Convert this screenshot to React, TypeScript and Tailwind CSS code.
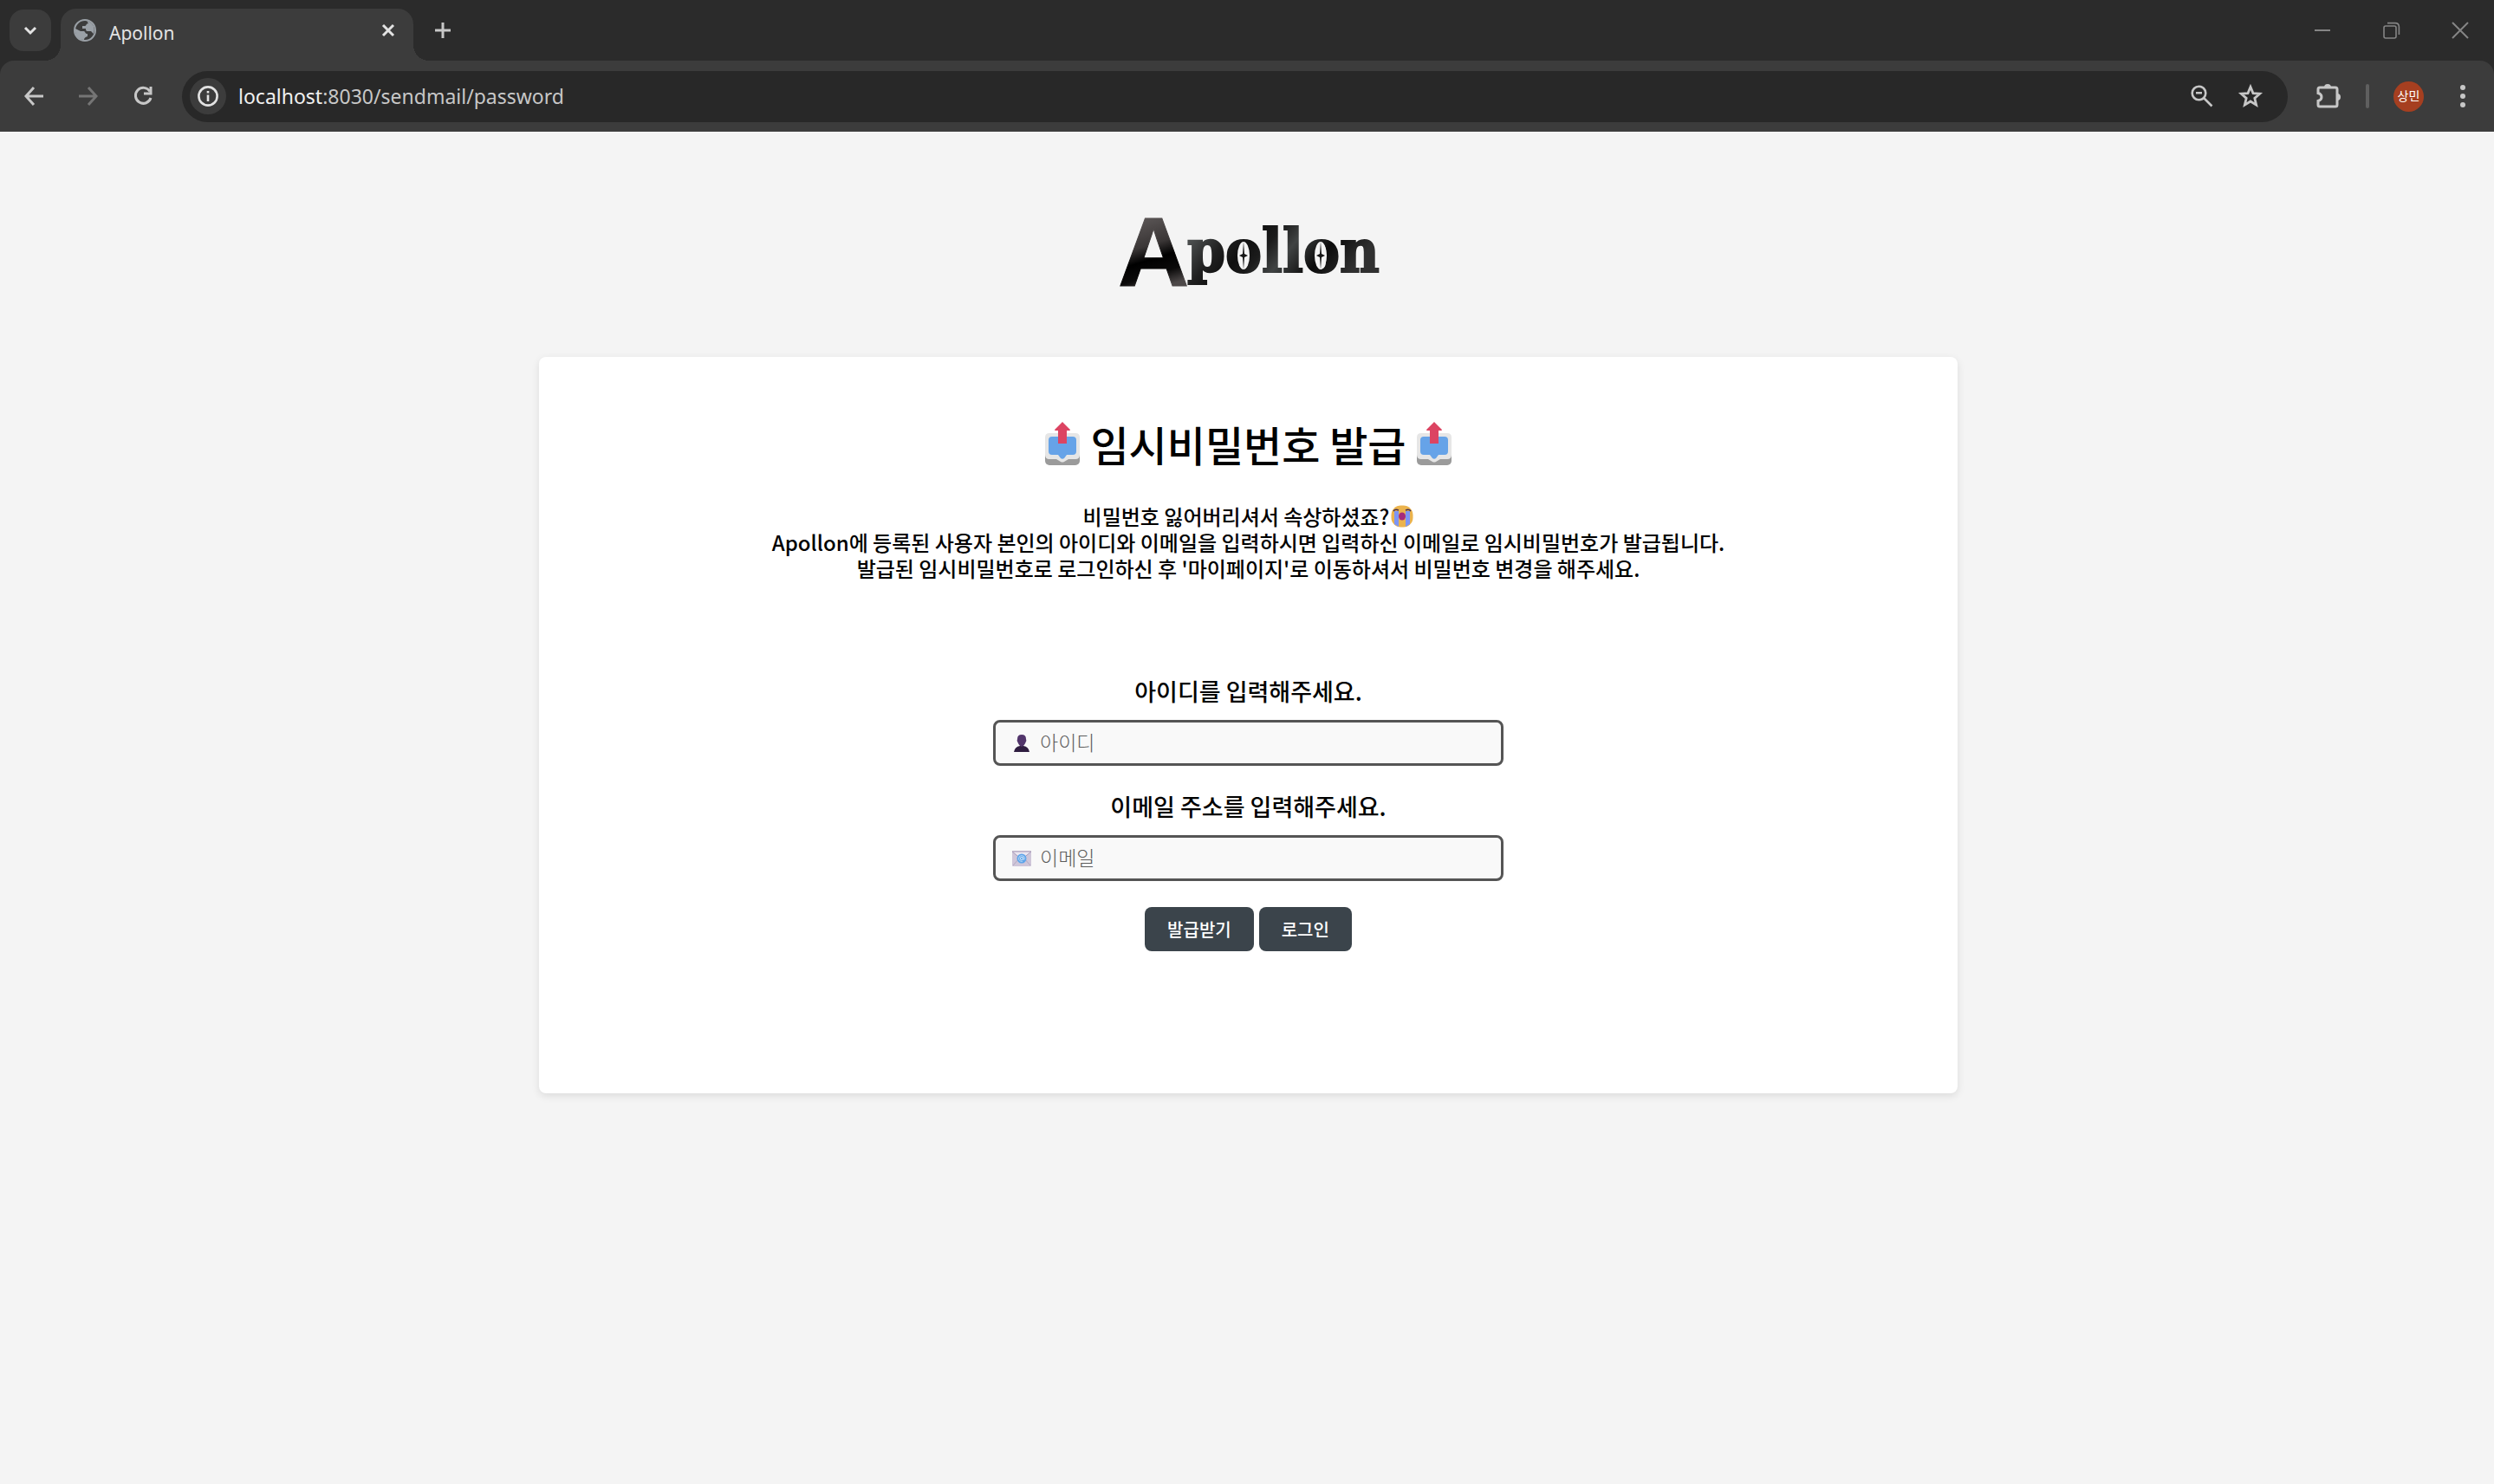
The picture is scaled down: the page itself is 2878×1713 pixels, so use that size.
import type { ReactNode } from "react";

const uiFont = `font-['Noto_Sans','Noto_Sans_CJK_KR',sans-serif]`;
const pageFont = `font-['Noto_Sans_CJK_KR',sans-serif]`;

interface IconProps {
  className?: string;
}

function GlobeIcon() {
  return (
    <svg width="26" height="26" viewBox="0 0 26 26" aria-hidden="true">
      <circle cx="13" cy="13" r="12" fill="#3c3c3c" stroke="#9aa0a6" strokeWidth="2" />
      <path
        d="M11 2 C15 1 20 3 23 8 C24 11 24 14 23 17 L20 14 H16 C14 14 14 12 14 11 H10 V8 H13 C15 8 14 5 17 5 L15 2 Z"
        fill="#9aa0a6"
      />
      <path d="M2 11 L8 14 H12 C14 15 13 17 16 17 V20 C13 21 12 22 12 24 C5 24 1 18 2 11 Z" fill="#9aa0a6" />
    </svg>
  );
}

function StrokeIcon({
  d,
  size,
  width = 2,
  className,
}: IconProps & { d: string; size: number; width?: number }) {
  return (
    <svg
      className={className}
      width={size}
      height={size}
      viewBox={`0 0 ${size} ${size}`}
      fill="none"
      stroke="currentColor"
      strokeWidth={width}
      aria-hidden="true"
    >
      <path d={d} />
    </svg>
  );
}

function ReloadIcon() {
  return (
    <svg width="24" height="24" viewBox="0 0 24 24" fill="none" stroke="#c7c7c7" strokeWidth="3" aria-hidden="true">
      <path d="M20 6.5 A9 9 0 1 0 21 14" />
      <path d="M21 1 V9 H13" />
    </svg>
  );
}

function InfoIcon() {
  return (
    <svg width="24" height="24" viewBox="0 0 24 24" fill="none" stroke="#e3e3e3" aria-hidden="true">
      <circle cx="12" cy="12" r="10.6" strokeWidth="2.6" />
      <path d="M12 10.5 V18 M12 6 V8.6" strokeWidth="2.6" />
    </svg>
  );
}

function ZoomOutIcon() {
  return (
    <svg width="26" height="26" viewBox="0 0 26 26" fill="none" stroke="#c7c7c7" strokeWidth="2.6" aria-hidden="true">
      <circle cx="9.5" cy="9.5" r="7.8" />
      <path d="M15 15 L24.5 24.5 M6 9.2 H13" />
    </svg>
  );
}

function StarIcon() {
  return (
    <svg width="30" height="30" viewBox="0 0 28 28" fill="none" stroke="#c7c7c7" strokeWidth="2.6" aria-hidden="true">
      <path d="M14 4 L16.8 10.8 L24 11.4 L18.5 16.2 L20.2 23.4 L14 19.6 L7.8 23.4 L9.5 16.2 L4 11.4 L11.2 10.8 Z" />
    </svg>
  );
}

function PuzzleIcon() {
  return (
    <svg width="30" height="30" viewBox="0 0 30 30" fill="none" aria-hidden="true">
      <path
        d="M5 5 H23 Q25 5 25 7 V25 Q25 27 23 27 H5 Q3 27 3 25 V20.5 Q7 19.5 7 16 Q7 12.5 3 11.5 V7 Q3 5 5 5 Z"
        stroke="#c7c7c7"
        strokeWidth="3"
      />
      <path d="M10 5 A4 4 0 0 1 18 5 Z M25 12 A4 4 0 0 1 25 20 Z" fill="#c7c7c7" />
    </svg>
  );
}

function RestoreIcon() {
  return (
    <svg width="20" height="20" viewBox="0 0 20 20" fill="none" stroke="#858585" strokeWidth="1.6" aria-hidden="true">
      <rect x="1" y="5" width="14" height="14" rx="2" />
      <path d="M5 1.6 H14 Q18.4 1.6 18.4 6 V15" />
    </svg>
  );
}

function OutboxIcon() {
  return (
    <svg width="40" height="50" viewBox="0 0 40 50" role="img" aria-label="보낼 편지함">
      <rect x="0" y="20" width="40" height="30" rx="5" fill="#9b9b9b" />
      <path
        d="M5 13 H35 Q40 13 40 18 V38 Q40 43 35 43 H27 L22 46 Q20 47 18 46 L13 43 H5 Q0 43 0 38 V18 Q0 13 5 13 Z"
        fill="#e6e6e6"
      />
      <path
        d="M8 17 H32 Q36 17 36 21 V34 Q36 38 32 38 H25 L22 42 Q20 43.5 18 42 L15 38 H8 Q4 38 4 34 V21 Q4 17 8 17 Z"
        fill="#66a3e8"
      />
      <path d="M20 0 L29 9 Q29 10 28 10 H25 V25 H15 V10 H12 Q11 10 11 9 Z" fill="#dc4462" />
    </svg>
  );
}

function CryingIcon() {
  return (
    <svg width="26" height="26" viewBox="0 0 26 26" role="img" aria-label="우는 얼굴">
      <rect x="0.5" y="0.5" width="25" height="25" rx="11" fill="#ebb34d" />
      <path d="M4 7 H9 V25 L4 22 Z M17 7 H22 V22 L17 25 Z" fill="#7c95f5" />
      <path d="M3 7 Q5 4 9 6 M17 6 Q21 4 23 7" stroke="#43304f" strokeWidth="1.5" fill="none" />
      <ellipse cx="13" cy="13" rx="4" ry="4.5" fill="#a52c7c" />
    </svg>
  );
}

function PersonIcon() {
  return (
    <svg className="shrink-0" width="22" height="20" viewBox="0 0 22 20" aria-hidden="true">
      <path d="M2 20 Q3 14 9 13 H13 Q19 14 20 20 Z" fill="#2f1d40" />
      <path d="M11 0 Q16 0 16 5 Q17 7 15.5 9 Q14 13 11 14 Q8 13 6.5 9 Q5 7 6 5 Q6 0 11 0 Z" fill="#52356b" />
    </svg>
  );
}

function MailIcon() {
  return (
    <svg className="shrink-0" width="22" height="18" viewBox="0 0 22 18" aria-hidden="true">
      <rect width="22" height="18" rx="1" fill="#cfc6d9" />
      <path d="M0 1 L11 10 L22 1 Z" fill="#ebe6f0" stroke="#a99db8" />
      <path d="M1 17 L8 9 M21 17 L14 9" stroke="#b3a8c1" />
      <circle cx="11" cy="9" r="5.5" fill="#5ea5ea" />
      <circle cx="11" cy="9" r="1.6" fill="none" stroke="#e4f0fb" strokeWidth="0.8" />
      <path d="M12.6 7.4 V10 Q14 11 14.4 9 Q14.4 5.6 11 5.6 Q7.6 5.6 7.6 9 Q7.6 12.4 12 12.4" fill="none" stroke="#cfe4f8" strokeWidth="0.8" />
    </svg>
  );
}

function Logo() {
  return (
    <svg width="312" height="150" viewBox="-6 -31 312 150" role="img" aria-label="Apollon">
      <defs>
        <linearGradient id="initial" x1="0.3" y1="0" x2="0.5" y2="1">
          <stop offset="0.2" stopColor="#5a5555" />
          <stop offset="0.45" stopColor="#3a3636" />
          <stop offset="0.58" stopColor="#000000" />
          <stop offset="0.72" stopColor="#0b0a0a" />
          <stop offset="0.85" stopColor="#4d4848" />
        </linearGradient>
        <linearGradient id="rest" x1="0" y1="0" x2="1" y2="0.3">
          <stop offset="0" stopColor="#3f4242" />
          <stop offset="0.12" stopColor="#4a4d4d" />
          <stop offset="0.28" stopColor="#202020" />
          <stop offset="0.4" stopColor="#101010" />
          <stop offset="0.5" stopColor="#1c1c1c" />
          <stop offset="0.62" stopColor="#404343" />
          <stop offset="0.8" stopColor="#0c0c0c" />
          <stop offset="1" stopColor="#303030" />
        </linearGradient>
      </defs>
      <text
        x="-1"
        y="83"
        fill="url(#initial)"
        stroke="url(#initial)"
        strokeWidth="1"
        className="font-['Liberation_Sans',sans-serif] text-[114px] font-bold"
      >
        A
      </text>
      <text
        x="79"
        y="67"
        fill="url(#rest)"
        stroke="url(#rest)"
        strokeWidth="2"
        className="font-['DejaVu_Serif_Condensed','DejaVu_Serif',serif] text-[70px] font-bold"
      >
        pollon
      </text>
      {/* compass needles inside both o's */}
      <g fill="#f4f4f4">
        <ellipse cx="144" cy="48" rx="7" ry="16" />
        <ellipse cx="233" cy="48" rx="7" ry="16" />
      </g>
      <g fill="#161616">
        <path d="M144 32 L145 46 L149 48 L145 50 L144 64 L143 50 L139 48 L143 46 Z" />
        <path d="M233 32 L234 46 L238 48 L234 50 L233 64 L232 50 L228 48 L232 46 Z" />
      </g>
    </svg>
  );
}

function IconButton({ label, className, children }: { label: string; className?: string; children: ReactNode }) {
  return (
    <button type="button" aria-label={label} className={`flex shrink-0 items-center justify-center ${className ?? ""}`}>
      {children}
    </button>
  );
}

function TabStrip() {
  return (
    <div className="flex h-[70px] items-start justify-between bg-[#2b2b2b]">
      <div className="flex">
        <IconButton label="탭 검색" className="mt-[11px] ml-[11px] size-12 rounded-2xl bg-[#3c3c3c] text-[#e3e3e3]">
          <StrokeIcon size={16} width={3} d="M2 5 L8 11 L14 5" />
        </IconButton>
        <div className="relative mt-[10px] ml-[11px] flex h-[60px] w-[407px] items-start rounded-t-[18px] bg-[#3c3c3c] pt-3 pr-4 pl-[15px]">
          <span className="absolute bottom-0 -left-[18px] size-[18px] bg-[radial-gradient(circle_at_0_0,transparent_18px,#3c3c3c_18px)]" />
          <span className="absolute -right-[18px] bottom-0 size-[18px] bg-[radial-gradient(circle_at_100%_0,transparent_18px,#3c3c3c_18px)]" />
          <GlobeIcon />
          <span className="ml-[15px] grow text-[21px] leading-8 text-[#e3e3e3]">Apollon</span>
          <IconButton label="탭 닫기" className="size-[26px] text-[#e3e3e3]">
            <StrokeIcon size={16} width={3} d="M2 2 L14 14 M14 2 L2 14" />
          </IconButton>
        </div>
        <IconButton label="새 탭" className="mt-[11px] ml-[10px] size-12 text-[#c7c7c7]">
          <StrokeIcon size={18} width={3} d="M9 0 V18 M0 9 H18" />
        </IconButton>
      </div>
      <div className="flex h-[70px] text-[#858585]">
        <IconButton label="최소화" className="w-20">
          <StrokeIcon size={18} d="M0 9 H18" />
        </IconButton>
        <IconButton label="이전 크기로 복원" className="w-20">
          <RestoreIcon />
        </IconButton>
        <IconButton label="닫기" className="w-[78px]">
          <StrokeIcon size={20} d="M1 1 L19 19 M19 1 L1 19" />
        </IconButton>
      </div>
    </div>
  );
}

function Toolbar() {
  return (
    <div className="bg-[#2b2b2b]">
      <div className="flex h-[82px] items-center rounded-t-2xl bg-[#3c3c3c] pr-[26px] pl-[7px]">
        <IconButton label="뒤로" className="h-12 w-[63px] text-[#c7c7c7]">
          <StrokeIcon size={22} width={3} d="M22 11 H2 M11 1 L2 11 L11 21" />
        </IconButton>
        <IconButton label="앞으로" className="h-12 w-[63px] text-[#757575]">
          <StrokeIcon size={22} width={3} d="M0 11 H20 M11 1 L20 11 L11 21" />
        </IconButton>
        <IconButton label="새로고침" className="h-12 w-[63px]">
          <ReloadIcon />
        </IconButton>
        <div className="ml-[14px] flex h-[59px] grow items-center rounded-full bg-[#282828] pr-7 pl-[9px]">
          <IconButton label="사이트 정보 보기" className="size-[42px] rounded-full bg-[#3c3c3c]">
            <InfoIcon />
          </IconButton>
          <a href="#top" className="ml-[14px] grow text-[23px] leading-9 text-[#c7c7c7]">
            <span className="text-[#f0f0f0]">localhost</span>:8030/sendmail/password
          </a>
          <IconButton label="축소" className="w-[26px]">
            <ZoomOutIcon />
          </IconButton>
          <IconButton label="북마크에 추가" className="ml-7 w-[30px]">
            <StarIcon />
          </IconButton>
        </div>
        <IconButton label="확장 프로그램" className="ml-8 w-[30px]">
          <PuzzleIcon />
        </IconButton>
        <span className="ml-7 h-7 w-1 rounded-full bg-[#5f5f5f]" />
        <button
          type="button"
          className="ml-7 flex size-[35px] items-center justify-center rounded-full bg-[#a63f20] text-[14px] leading-5 text-white"
        >
          상민
        </button>
        <IconButton label="메뉴" className="ml-[35px] w-5">
          <svg width="6" height="26" viewBox="0 0 6 26" fill="#c7c7c7" aria-hidden="true">
            <circle cx="3" cy="3" r="3" />
            <circle cx="3" cy="13" r="3" />
            <circle cx="3" cy="23" r="3" />
          </svg>
        </IconButton>
      </div>
    </div>
  );
}

interface FieldProps {
  id: string;
  label: string;
  type: string;
  placeholder: string;
  icon: ReactNode;
}

function Field({ id, label, type, placeholder, icon }: FieldProps) {
  return (
    <div className="flex w-full flex-col items-center">
      <label htmlFor={id} className="mb-[15px] text-[27px] leading-9 font-medium">
        {label}
      </label>
      <div className="flex h-[53px] w-full max-w-[589px] items-center rounded-lg border-3 border-[#555] bg-[#f9f9f9] px-[19px]">
        {icon}
        <input
          id={id}
          type={type}
          placeholder={placeholder}
          className="ml-[10px] w-full bg-transparent pb-1 text-[23px] leading-8 font-light outline-none placeholder:text-[#5c5c5c]"
        />
      </div>
    </div>
  );
}

const button = `h-[51px] rounded-lg bg-[#3b444b] px-[26px] pt-px text-[20px] leading-7 font-medium text-white`;

export default function App() {
  return (
    <div id="top" className={`flex min-h-screen flex-col bg-[#f4f4f4] text-black ${pageFont}`}>
      <header className={uiFont}>
        <TabStrip />
        <Toolbar />
      </header>
      <main className="flex flex-col items-center pt-16 pl-[3px]">
        <Logo />
        <section className="mt-[46px] flex w-full max-w-[1637px] flex-col items-center rounded-lg bg-white px-10 pt-[70px] pb-[164px] shadow-[0_3px_10px_rgba(0,0,0,0.1)]">
          <h1 className="flex items-center gap-3 text-[48px] leading-[60px] font-medium">
            <OutboxIcon />
            임시비밀번호 발급
            <OutboxIcon />
          </h1>
          <p className="mt-[39px] text-center text-[24px] leading-[30px] font-medium">
            <span className="flex items-center justify-center gap-[2px]">
              비밀번호 잃어버리셔서 속상하셨죠?
              <CryingIcon />
            </span>
            Apollon에 등록된 사용자 본인의 아이디와 이메일을 입력하시면 입력하신 이메일로 임시비밀번호가 발급됩니다.
            <br />
            발급된 임시비밀번호로 로그인하신 후 '마이페이지'로 이동하셔서 비밀번호 변경을 해주세요.
          </p>
          <form
            className="mt-[109px] flex w-full flex-col items-center gap-[29px]"
            onSubmit={(e) => e.preventDefault()}
          >
            <Field id="userId" label="아이디를 입력해주세요." type="text" placeholder="아이디" icon={<PersonIcon />} />
            <Field id="email" label="이메일 주소를 입력해주세요." type="email" placeholder="이메일" icon={<MailIcon />} />
            <div className="flex gap-[6px] pt-px">
              <button type="submit" className={button}>
                발급받기
              </button>
              <button type="button" className={button}>
                로그인
              </button>
            </div>
          </form>
        </section>
      </main>
    </div>
  );
}
